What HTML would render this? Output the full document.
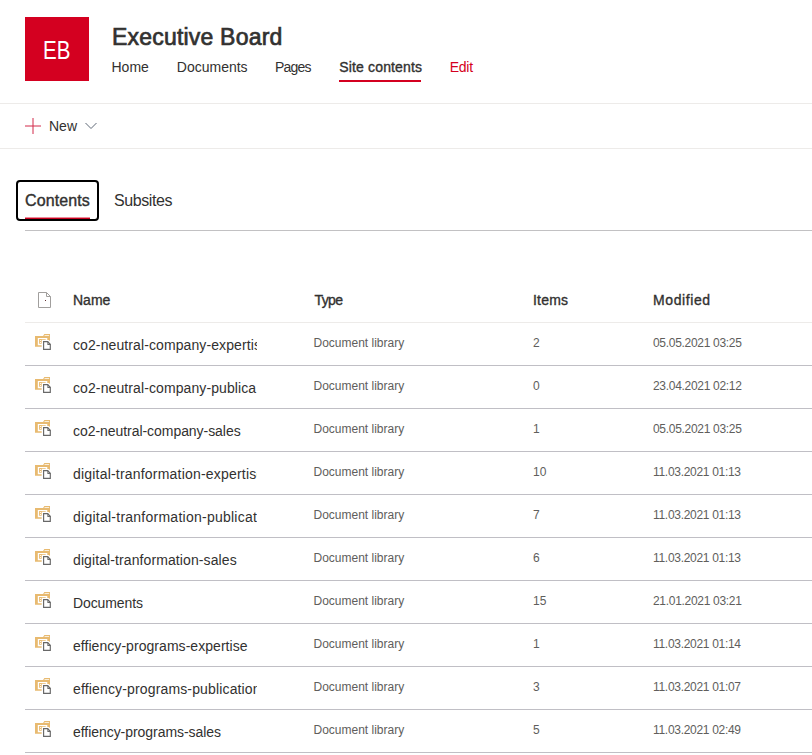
<!DOCTYPE html>
<html>
<head>
<meta charset="utf-8">
<style>
html,body{margin:0;padding:0;background:#fff;width:812px;height:755px;overflow:hidden;position:relative;}
body{font-family:"Liberation Sans",sans-serif;color:#323130;}
.a{position:absolute;white-space:nowrap;line-height:1;}
.hl{position:absolute;left:0;width:812px;height:1px;background:#edebe9;}
#logo{position:absolute;left:25px;top:17px;width:64px;height:64px;background:#d40020;}
.t14{font-size:14px;}
.r{position:absolute;left:25px;width:787px;height:43px;}
.r:before{content:"";position:absolute;left:0;top:43px;width:787px;height:1px;background:#c0bfc5;}
.ic{position:absolute;left:10px;top:12px;}
.nm{position:absolute;left:48px;top:16.2px;width:184px;padding-bottom:5px;overflow:hidden;font-size:14px;line-height:1;white-space:nowrap;color:#323130;}
.ty,.it,.md{position:absolute;top:14.6px;font-size:12px;line-height:1;white-space:nowrap;color:#605e5c;}
.ty{left:288.5px;}.it{left:508px;}.md{left:628px;letter-spacing:-0.3px;}
</style>
</head>
<body>
<div id="logo"></div>
<div class="a" style="left:42.6px;top:37.4px;font-size:26px;color:#fff;transform:scaleX(0.79);transform-origin:0 0;">EB</div>

<div class="a" style="left:112px;top:26px;font-size:23px;letter-spacing:0.2px;-webkit-text-stroke:0.7px #323130;color:#323130;">Executive Board</div>

<div class="a t14" style="left:111.5px;top:60.2px;">Home</div>
<div class="a t14" style="left:176.8px;top:60.2px;">Documents</div>
<div class="a t14" style="left:275px;top:60.2px;letter-spacing:-0.8px;">Pages</div>
<div class="a t14" style="left:339.3px;top:60.2px;letter-spacing:0.15px;-webkit-text-stroke:0.35px #323130;">Site contents</div>
<div class="a t14" style="left:449.8px;top:60.2px;letter-spacing:-0.3px;color:#d40020;">Edit</div>
<div style="position:absolute;left:339px;top:80px;width:82px;height:2px;background:#d40020;"></div>

<div class="hl" style="top:103px;"></div>

<svg style="position:absolute;left:25px;top:118px;" width="16" height="16" viewBox="0 0 16 16"><path d="M8 0V16M0 8H16" stroke="#d22a4a" stroke-width="1" fill="none"/></svg>
<div class="a t14" style="left:49px;top:119px;">New</div>
<svg style="position:absolute;left:85px;top:122px;" width="12" height="8" viewBox="0 0 12 8"><path d="M0.5 1L6 6.5L11.5 1" stroke="#5f6877" stroke-width="1" fill="none"/></svg>

<div class="hl" style="top:148px;"></div>

<div style="position:absolute;left:16px;top:180px;width:79px;height:37px;border:2px solid #000;border-radius:4px;"></div>
<div class="a" style="left:25px;top:193.4px;font-size:16px;letter-spacing:0.1px;-webkit-text-stroke:0.4px #323130;">Contents</div>
<div style="position:absolute;left:25px;top:218px;width:65px;height:1px;background:#c8001e;box-shadow:0 -1px 0 rgba(212,0,32,0.45);"></div>
<div class="a" style="left:114px;top:193.4px;font-size:16px;letter-spacing:-0.4px;">Subsites</div>
<div style="position:absolute;left:25px;top:230px;width:787px;height:1px;background:#c2c1c3;"></div>

<!-- header -->
<svg style="position:absolute;left:37px;top:291px;" width="16" height="18" viewBox="0 0 16 18"><path d="M1.5 1.5H9.5L13.5 5.5V16.5H1.5Z" stroke="#a19f9d" fill="none"/><path d="M9.5 1.5V5.5H13.5" stroke="#a19f9d" fill="none"/><rect x="8" y="9" width="1" height="1" fill="#603030"/></svg>
<div class="a t14" style="left:73px;top:293px;-webkit-text-stroke:0.35px #323130;">Name</div>
<div class="a t14" style="left:314.5px;top:293px;-webkit-text-stroke:0.35px #323130;letter-spacing:-0.6px;">Type</div>
<div class="a t14" style="left:533px;top:293px;-webkit-text-stroke:0.35px #323130;letter-spacing:0.2px;">Items</div>
<div class="a t14" style="left:653px;top:293px;-webkit-text-stroke:0.35px #323130;letter-spacing:0.6px;">Modified</div>
<div style="position:absolute;left:25px;top:322px;width:787px;height:1px;background:#edebe9;"></div>

<!--ROWS-->
<div class="r" style="top:322px;"><svg class="ic" width="16" height="16" viewBox="0 0 16 16"><path fill="#e8ba70" d="M0 2H8.1L9.3 0H15V6.9L13.7 5.9H12.3V4H2.8V11.2H6.7V12.8H0Z"/><path fill="#fff" d="M9.5 1H14.1V1.75H9.5Z"/><path fill="#e8ba70" d="M4.1 5H10.7V5.8H6.7V9.8H4.1Z"/><path fill="#fff" d="M5 6.1H5.9V7H5ZM5 8.1H5.9V9H5Z"/><path fill="#fff" stroke="#686868" stroke-width="1.15" stroke-linejoin="miter" d="M8.6 7.6H12.6L15.3 10.3V15.3H8.6Z"/><path fill="none" stroke="#686868" stroke-width="1.05" d="M12.9 7.6V10.5H15.3"/></svg><div class="nm" style="letter-spacing:0.1px">co2-neutral-company-expertise</div><div class="ty">Document library</div><div class="it">2</div><div class="md">05.05.2021 03:25</div></div>
<div class="r" style="top:365px;"><svg class="ic" width="16" height="16" viewBox="0 0 16 16"><path fill="#e8ba70" d="M0 2H8.1L9.3 0H15V6.9L13.7 5.9H12.3V4H2.8V11.2H6.7V12.8H0Z"/><path fill="#fff" d="M9.5 1H14.1V1.75H9.5Z"/><path fill="#e8ba70" d="M4.1 5H10.7V5.8H6.7V9.8H4.1Z"/><path fill="#fff" d="M5 6.1H5.9V7H5ZM5 8.1H5.9V9H5Z"/><path fill="#fff" stroke="#686868" stroke-width="1.15" stroke-linejoin="miter" d="M8.6 7.6H12.6L15.3 10.3V15.3H8.6Z"/><path fill="none" stroke="#686868" stroke-width="1.05" d="M12.9 7.6V10.5H15.3"/></svg><div class="nm" style="letter-spacing:0.1px">co2-neutral-company-publica</div><div class="ty">Document library</div><div class="it">0</div><div class="md">23.04.2021 02:12</div></div>
<div class="r" style="top:408px;"><svg class="ic" width="16" height="16" viewBox="0 0 16 16"><path fill="#e8ba70" d="M0 2H8.1L9.3 0H15V6.9L13.7 5.9H12.3V4H2.8V11.2H6.7V12.8H0Z"/><path fill="#fff" d="M9.5 1H14.1V1.75H9.5Z"/><path fill="#e8ba70" d="M4.1 5H10.7V5.8H6.7V9.8H4.1Z"/><path fill="#fff" d="M5 6.1H5.9V7H5ZM5 8.1H5.9V9H5Z"/><path fill="#fff" stroke="#686868" stroke-width="1.15" stroke-linejoin="miter" d="M8.6 7.6H12.6L15.3 10.3V15.3H8.6Z"/><path fill="none" stroke="#686868" stroke-width="1.05" d="M12.9 7.6V10.5H15.3"/></svg><div class="nm" style="letter-spacing:-0.05px">co2-neutral-company-sales</div><div class="ty">Document library</div><div class="it">1</div><div class="md">05.05.2021 03:25</div></div>
<div class="r" style="top:451px;"><svg class="ic" width="16" height="16" viewBox="0 0 16 16"><path fill="#e8ba70" d="M0 2H8.1L9.3 0H15V6.9L13.7 5.9H12.3V4H2.8V11.2H6.7V12.8H0Z"/><path fill="#fff" d="M9.5 1H14.1V1.75H9.5Z"/><path fill="#e8ba70" d="M4.1 5H10.7V5.8H6.7V9.8H4.1Z"/><path fill="#fff" d="M5 6.1H5.9V7H5ZM5 8.1H5.9V9H5Z"/><path fill="#fff" stroke="#686868" stroke-width="1.15" stroke-linejoin="miter" d="M8.6 7.6H12.6L15.3 10.3V15.3H8.6Z"/><path fill="none" stroke="#686868" stroke-width="1.05" d="M12.9 7.6V10.5H15.3"/></svg><div class="nm" style="letter-spacing:0.2px">digital-tranformation-expertise</div><div class="ty">Document library</div><div class="it">10</div><div class="md">11.03.2021 01:13</div></div>
<div class="r" style="top:494px;"><svg class="ic" width="16" height="16" viewBox="0 0 16 16"><path fill="#e8ba70" d="M0 2H8.1L9.3 0H15V6.9L13.7 5.9H12.3V4H2.8V11.2H6.7V12.8H0Z"/><path fill="#fff" d="M9.5 1H14.1V1.75H9.5Z"/><path fill="#e8ba70" d="M4.1 5H10.7V5.8H6.7V9.8H4.1Z"/><path fill="#fff" d="M5 6.1H5.9V7H5ZM5 8.1H5.9V9H5Z"/><path fill="#fff" stroke="#686868" stroke-width="1.15" stroke-linejoin="miter" d="M8.6 7.6H12.6L15.3 10.3V15.3H8.6Z"/><path fill="none" stroke="#686868" stroke-width="1.05" d="M12.9 7.6V10.5H15.3"/></svg><div class="nm" style="letter-spacing:0.25px">digital-tranformation-publications</div><div class="ty">Document library</div><div class="it">7</div><div class="md">11.03.2021 01:13</div></div>
<div class="r" style="top:537px;"><svg class="ic" width="16" height="16" viewBox="0 0 16 16"><path fill="#e8ba70" d="M0 2H8.1L9.3 0H15V6.9L13.7 5.9H12.3V4H2.8V11.2H6.7V12.8H0Z"/><path fill="#fff" d="M9.5 1H14.1V1.75H9.5Z"/><path fill="#e8ba70" d="M4.1 5H10.7V5.8H6.7V9.8H4.1Z"/><path fill="#fff" d="M5 6.1H5.9V7H5ZM5 8.1H5.9V9H5Z"/><path fill="#fff" stroke="#686868" stroke-width="1.15" stroke-linejoin="miter" d="M8.6 7.6H12.6L15.3 10.3V15.3H8.6Z"/><path fill="none" stroke="#686868" stroke-width="1.05" d="M12.9 7.6V10.5H15.3"/></svg><div class="nm" style="letter-spacing:0.1px">digital-tranformation-sales</div><div class="ty">Document library</div><div class="it">6</div><div class="md">11.03.2021 01:13</div></div>
<div class="r" style="top:580px;"><svg class="ic" width="16" height="16" viewBox="0 0 16 16"><path fill="#e8ba70" d="M0 2H8.1L9.3 0H15V6.9L13.7 5.9H12.3V4H2.8V11.2H6.7V12.8H0Z"/><path fill="#fff" d="M9.5 1H14.1V1.75H9.5Z"/><path fill="#e8ba70" d="M4.1 5H10.7V5.8H6.7V9.8H4.1Z"/><path fill="#fff" d="M5 6.1H5.9V7H5ZM5 8.1H5.9V9H5Z"/><path fill="#fff" stroke="#686868" stroke-width="1.15" stroke-linejoin="miter" d="M8.6 7.6H12.6L15.3 10.3V15.3H8.6Z"/><path fill="none" stroke="#686868" stroke-width="1.05" d="M12.9 7.6V10.5H15.3"/></svg><div class="nm" style="letter-spacing:-0.1px">Documents</div><div class="ty">Document library</div><div class="it">15</div><div class="md">21.01.2021 03:21</div></div>
<div class="r" style="top:623px;"><svg class="ic" width="16" height="16" viewBox="0 0 16 16"><path fill="#e8ba70" d="M0 2H8.1L9.3 0H15V6.9L13.7 5.9H12.3V4H2.8V11.2H6.7V12.8H0Z"/><path fill="#fff" d="M9.5 1H14.1V1.75H9.5Z"/><path fill="#e8ba70" d="M4.1 5H10.7V5.8H6.7V9.8H4.1Z"/><path fill="#fff" d="M5 6.1H5.9V7H5ZM5 8.1H5.9V9H5Z"/><path fill="#fff" stroke="#686868" stroke-width="1.15" stroke-linejoin="miter" d="M8.6 7.6H12.6L15.3 10.3V15.3H8.6Z"/><path fill="none" stroke="#686868" stroke-width="1.05" d="M12.9 7.6V10.5H15.3"/></svg><div class="nm" style="letter-spacing:0.05px">effiency-programs-expertise</div><div class="ty">Document library</div><div class="it">1</div><div class="md">11.03.2021 01:14</div></div>
<div class="r" style="top:666px;"><svg class="ic" width="16" height="16" viewBox="0 0 16 16"><path fill="#e8ba70" d="M0 2H8.1L9.3 0H15V6.9L13.7 5.9H12.3V4H2.8V11.2H6.7V12.8H0Z"/><path fill="#fff" d="M9.5 1H14.1V1.75H9.5Z"/><path fill="#e8ba70" d="M4.1 5H10.7V5.8H6.7V9.8H4.1Z"/><path fill="#fff" d="M5 6.1H5.9V7H5ZM5 8.1H5.9V9H5Z"/><path fill="#fff" stroke="#686868" stroke-width="1.15" stroke-linejoin="miter" d="M8.6 7.6H12.6L15.3 10.3V15.3H8.6Z"/><path fill="none" stroke="#686868" stroke-width="1.05" d="M12.9 7.6V10.5H15.3"/></svg><div class="nm" style="letter-spacing:0.15px">effiency-programs-publications</div><div class="ty">Document library</div><div class="it">3</div><div class="md">11.03.2021 01:07</div></div>
<div class="r" style="top:709px;"><svg class="ic" width="16" height="16" viewBox="0 0 16 16"><path fill="#e8ba70" d="M0 2H8.1L9.3 0H15V6.9L13.7 5.9H12.3V4H2.8V11.2H6.7V12.8H0Z"/><path fill="#fff" d="M9.5 1H14.1V1.75H9.5Z"/><path fill="#e8ba70" d="M4.1 5H10.7V5.8H6.7V9.8H4.1Z"/><path fill="#fff" d="M5 6.1H5.9V7H5ZM5 8.1H5.9V9H5Z"/><path fill="#fff" stroke="#686868" stroke-width="1.15" stroke-linejoin="miter" d="M8.6 7.6H12.6L15.3 10.3V15.3H8.6Z"/><path fill="none" stroke="#686868" stroke-width="1.05" d="M12.9 7.6V10.5H15.3"/></svg><div class="nm" style="letter-spacing:-0.05px">effiency-programs-sales</div><div class="ty">Document library</div><div class="it">5</div><div class="md">11.03.2021 02:49</div></div>
<!--/ROWS-->
</body>
</html>
